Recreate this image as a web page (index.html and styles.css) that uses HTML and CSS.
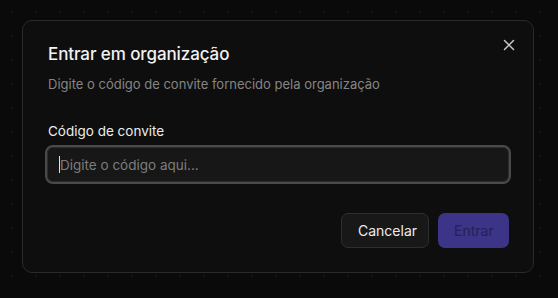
FILE: index.html
```html
<!DOCTYPE html>
<html lang="pt">
<head>
<meta charset="utf-8">
<link rel="stylesheet" href="styles.css">
</head>
<body>
<div class="dialog">
  <button class="close" aria-label="Fechar">
    <svg width="12" height="12" viewBox="0 0 12 12"><path d="M1.5 1.5l9 9M10.5 1.5l-9 9" stroke="#c8c8c8" stroke-width="1.5" stroke-linecap="round"/></svg>
  </button>
  <h2 class="title">Entrar em organização</h2>
  <p class="subtitle">Digite o código de convite fornecido pela organização</p>
  <label class="label" for="code">Código de convite</label>
  <div class="input-wrap">
    <span class="caret"></span><span class="placeholder">Digite o código aqui...</span>
  </div>
  <div class="actions">
    <button class="btn cancel">Cancelar</button>
    <button class="btn submit">Entrar</button>
  </div>
</div>
</body>
</html>
```
FILE: styles.css
```css
* { box-sizing: border-box; }
html, body { margin: 0; padding: 0; }
body {
  width: 558px;
  height: 298px;
  background-color: #0a0a0a;
  background-image: radial-gradient(circle, #151515 0.8px, transparent 1px);
  background-size: 24px 24px;
  font-family: "Inter", "Noto Sans", sans-serif;
  padding: 20px 0 0 22px;
  overflow: hidden;
}
.dialog {
  position: relative;
  width: 512px;
  height: 253px;
  background: #0e0e0e;
  border: 1px solid #2a2a2a;
  border-radius: 10px;
  padding: 21px 24px 0 25px;
  display: flex;
  flex-direction: column;
}
.close {
  position: absolute;
  top: 18px;
  right: 18px;
  background: none;
  border: 0;
  padding: 0;
  width: 12px;
  height: 12px;
  display: flex;
}
.title {
  margin: 0;
  font-size: 17px;
  font-weight: 500;
  color: #f2f2f2;
  line-height: 24px;
  letter-spacing: -0.1px;
}
.subtitle {
  margin: 9px 0 0;
  font-size: 13px;
  color: #858585;
  line-height: 18px;
}
.label {
  margin-top: 29px;
  font-size: 13.5px;
  font-weight: 400;
  color: #ececec;
  line-height: 18px;
}
.input-wrap {
  margin-top: 5px;
  margin-left: -3px;
  width: 466px;
  height: 39px;
  border: 2px solid #4a4a4a;
  border-radius: 8px;
  background: #171717;
  box-shadow: inset 0 0 0 1px #2c2c2c;
  display: flex;
  align-items: center;
  padding-left: 12px;
}
.caret {
  width: 1px;
  height: 17px;
  background: #e0e0e0;
}
.placeholder {
  font-size: 13.5px;
  color: #7d7d7d;
}
.actions {
  margin-top: 29px;
  display: flex;
  justify-content: flex-end;
  gap: 9px;
}
.btn {
  height: 35px;
  border-radius: 7px;
  font-family: inherit;
  font-size: 14px;
  padding: 0 16px;
}
.cancel {
  width: 88px;
  background: #181818;
  border: 1px solid #2e2e2e;
  color: #ececec;
}
.submit {
  width: 71px;
  background: #3b3487;
  border: 0;
  color: #26215a;
}
```
